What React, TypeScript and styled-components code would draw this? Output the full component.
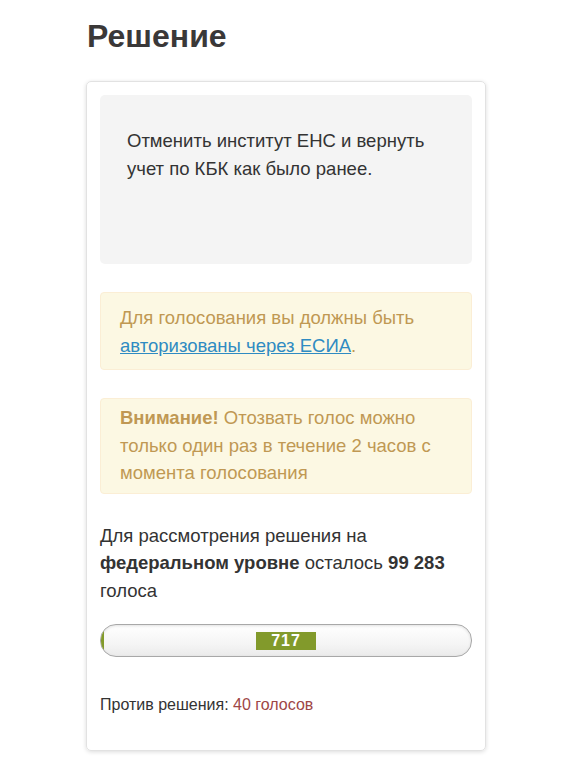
import React from "react";
import styled, { createGlobalStyle } from "styled-components";

const Global = createGlobalStyle`
  html, body { margin: 0; padding: 0; background: #fff; }
  body { font-family: "Liberation Sans", Arial, sans-serif; color: #333; }
`;

const Page = styled.div`
  width: 400px;
  margin: 0 auto;
  padding-top: 17px;
  padding-bottom: 8px;
`;

const Title = styled.h1`
  margin: 0 0 0 1px;
  font-size: 32px;
  line-height: 38px;
  font-weight: bold;
  color: #3a3838;
`;

const Card = styled.div`
  margin-top: 26px;
  border: 1px solid #e2e2e2;
  border-radius: 5px;
  box-shadow: 0 1px 4px rgba(0, 0, 0, 0.14);
  padding: 13px 13px 35px;
  display: flex;
  flex-direction: column;
`;

const Proposal = styled.div`
  background: #f4f4f4;
  border-radius: 5px;
  min-height: 169px;
  box-sizing: border-box;
  padding: 32px 27px;
  font-size: 18.5px;
  line-height: 28px;
  color: #333;
`;

const Alert = styled.div<{ $pt: number; $pb: number }>`
  margin-top: 28px;
  background: #fcf8e3;
  border: 1px solid #fbeed5;
  border-radius: 4px;
  padding: ${(p) => p.$pt}px 19px ${(p) => p.$pb}px;
  font-size: 18.5px;
  line-height: 27.5px;
  color: #c09853;
`;

const Link = styled.a`
  color: #2f8bc2;
  text-decoration: underline;
`;

const Strong = styled.b`
  font-weight: bold;
`;

const Need = styled.div`
  margin-top: 28px;
  font-size: 18.5px;
  line-height: 27.5px;
  color: #333;
`;

const Bar = styled.div`
  position: relative;
  margin-top: 20px;
  height: 33px;
  box-sizing: border-box;
  border: 1px solid #a8a8a8;
  border-radius: 16px;
  background: linear-gradient(#ffffff, #f5f5f5 60%, #ebebeb);
  box-shadow: inset 0 1px 3px rgba(0, 0, 0, 0.12);
  overflow: hidden;
  display: flex;
  align-items: center;
  justify-content: center;
`;

const Fill = styled.div`
  position: absolute;
  left: 0;
  top: 0;
  bottom: 0;
  background: #829a2b;
  border-radius: 16px 0 0 16px;
`;

const Count = styled.span`
  position: relative;
  background: #829a2b;
  color: #fff;
  font-weight: bold;
  font-size: 16px;
  line-height: 18px;
  width: 60px;
  text-align: center;
  letter-spacing: 1px;
`;

const Against = styled.div`
  margin-top: 38px;
  font-size: 16px;
  line-height: 20px;
  color: #333;
`;

const AgainstCount = styled.span`
  color: #9e4646;
`;

export default function App() {
  const votes = 717;
  const total = 100000;
  return (
    <>
      <Global />
      <Page>
        <Title>Решение</Title>
        <Card>
          <Proposal>Отменить институт ЕНС и вернуть учет по КБК как было ранее.</Proposal>
          <Alert $pt={11} $pb={10}>
            Для голосования вы должны быть <Link href="#">авторизованы через ЕСИА</Link>.
          </Alert>
          <Alert $pt={5} $pb={6}>
            <Strong>Внимание!</Strong> Отозвать голос можно только один раз в течение 2 часов с
            момента голосования
          </Alert>
          <Need>
            Для рассмотрения решения на <Strong>федеральном уровне</Strong> осталось{" "}
            <Strong>99 283</Strong> голоса
          </Need>
          <Bar>
            <Fill style={{ width: `${Math.max((votes / total) * 100, 0.8)}%` }} />
            <Count>{votes}</Count>
          </Bar>
          <Against>
            Против решения: <AgainstCount>40 голосов</AgainstCount>
          </Against>
        </Card>
      </Page>
    </>
  );
}
